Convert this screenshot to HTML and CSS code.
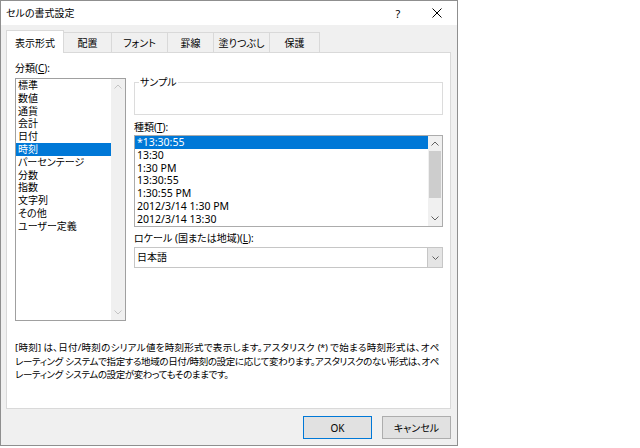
FILE: index.html
```html
<!DOCTYPE html>
<html lang="ja">
<head>
    <meta charset="UTF-8">
    <title>セルの書式設定</title>
    <link rel="stylesheet" href="styles.css">
</head>
<body>
    <div class="dialog">
        <div class="titlebar">
            <span class="title">セルの書式設定</span>
            <span class="help">?</span>
            <span class="close">
                <svg width="10" height="10" viewBox="0 0 10 10"><path d="M0.5 0.5L9.5 9.5M9.5 0.5L0.5 9.5" stroke="#000" stroke-width="1" fill="none"/></svg>
            </span>
        </div>
        <div class="body">
            <div class="tabs">
                <div class="tab active">表示形式</div>
                <div class="tab">配置</div>
                <div class="tab">フォント</div>
                <div class="tab">罫線</div>
                <div class="tab">塗りつぶし</div>
                <div class="tab">保護</div>
            </div>
            <div class="panel">
                <div class="columns">
                    <div class="col-left">
                        <label class="field-label">分類(<u>C</u>):</label>
                        <div class="listbox category">
                            <ul class="items">
                                <li>標準</li>
                                <li>数値</li>
                                <li>通貨</li>
                                <li>会計</li>
                                <li>日付</li>
                                <li class="selected">時刻</li>
                                <li>パーセンテージ</li>
                                <li>分数</li>
                                <li>指数</li>
                                <li>文字列</li>
                                <li>その他</li>
                                <li>ユーザー定義</li>
                            </ul>
                            <div class="scrollbar disabled">
                                <span class="arrow"><svg width="8" height="5" viewBox="0 0 8 5"><path d="M0.5 4.5L4 1L7.5 4.5" stroke="currentColor" fill="none"/></svg></span>
                                <span class="arrow"><svg width="8" height="5" viewBox="0 0 8 5"><path d="M0.5 0.5L4 4L7.5 0.5" stroke="currentColor" fill="none"/></svg></span>
                            </div>
                        </div>
                    </div>
                    <div class="col-right">
                        <fieldset class="sample">
                            <legend>サンプル</legend>
                        </fieldset>
                        <label class="field-label types-label">種類(<u>T</u>):</label>
                        <div class="listbox types">
                            <ul class="items">
                                <li class="selected">*13:30:55</li>
                                <li>13:30</li>
                                <li>1:30 PM</li>
                                <li>13:30:55</li>
                                <li>1:30:55 PM</li>
                                <li>2012/3/14 1:30 PM</li>
                                <li>2012/3/14 13:30</li>
                            </ul>
                            <div class="scrollbar">
                                <span class="arrow"><svg width="8" height="5" viewBox="0 0 8 5"><path d="M0.5 4.5L4 1L7.5 4.5" stroke="currentColor" fill="none"/></svg></span>
                                <div class="track"><div class="thumb"></div></div>
                                <span class="arrow"><svg width="8" height="5" viewBox="0 0 8 5"><path d="M0.5 0.5L4 4L7.5 0.5" stroke="currentColor" fill="none"/></svg></span>
                            </div>
                        </div>
                        <label class="field-label locale-label">ロケール (国または地域)(<u>L</u>):</label>
                        <div class="combo">
                            <span class="combo-value">日本語</span>
                            <span class="combo-btn"><svg width="7" height="4" viewBox="0 0 7 4"><path d="M0.5 0.5L3.5 3.5L6.5 0.5" stroke="#606060" fill="none"/></svg></span>
                        </div>
                    </div>
                </div>
                <p class="desc">
                    <span class="desc-line full">[時刻] は、日付/時刻のシリアル値を時刻形式で表示します。アスタリスク (*) で始まる時刻形式は、オペ</span>
                    <span class="desc-line full">レーティング システムで指定する地域の日付/時刻の設定に応じて変わります。アスタリスクのない形式は、オペ</span>
                    <span class="desc-line">レーティング システムの設定が変わってもそのままです。</span>
                </p>
            </div>
            <div class="buttons">
                <button class="default">OK</button>
                <button>キャンセル</button>
            </div>
        </div>
    </div>
</body>
</html>
```

FILE: styles.css
```css
body {
    margin: 0;
    background: #fff;
    font-family: "Noto Sans", "Noto Sans CJK JP", sans-serif;
    font-size: 10px;
    line-height: 13px;
    color: #000;
    font-feature-settings: "palt";
}

.dialog {
    width: 458px;
    height: 446px;
    box-sizing: border-box;
    border: 1px solid #8f8f8f;
    display: flex;
    flex-direction: column;
    background: #f0f0f0;
}

/* title bar */
.titlebar {
    height: 24px;
    background: #fff;
    display: flex;
    align-items: center;
    padding-left: 5px;
    font-size: 10px;
}

.help {
    margin-left: auto;
    width: 20px;
    margin-right: 9px;
    text-align: center;
    font-size: 11px;
}

.close {
    width: 40px;
    display: flex;
    justify-content: center;
}

.body {
    flex: 1;
    padding: 5px 6px 0 5px;
    display: flex;
    flex-direction: column;
}

/* tabs */
.tabs {
    display: flex;
    align-items: flex-end;
    height: 22px;
}

.tab {
    height: 20px;
    box-sizing: border-box;
    border: 1px solid #d9d9d9;
    border-bottom: none;
    margin-left: -1px;
    display: flex;
    align-items: center;
    justify-content: center;
    padding-top: 1px;
}

.tab:nth-child(1) { width: 58px; margin-left: 0; }
.tab:nth-child(2) { width: 48px; }
.tab:nth-child(3) { width: 57px; }
.tab:nth-child(4) { width: 47px; }
.tab:nth-child(5) { width: 57px; }
.tab:nth-child(6) { width: 51px; }

.tab.active {
    height: 23px;
    margin-bottom: -1px;
    background: #fff;
    position: relative;
    z-index: 1;
    padding-top: 2px;
}

.tab.active + .tab {
    border-left: none;
    margin-left: 0;
}

.panel {
    background: #fff;
    border: 1px solid #d9d9d9;
    height: 357px;
    box-sizing: border-box;
    padding: 9px 7px 0 8px;
}

.columns {
    display: flex;
    gap: 8px;
}

.col-left {
    width: 111px;
}

.col-right {
    width: 309px;
}

.field-label {
    display: block;
    height: 13px;
}

/* list boxes */
.listbox {
    display: flex;
    border: 1px solid #a0a0a0;
    box-sizing: border-box;
    background: #fff;
}

.listbox.category {
    margin-top: 3px;
    height: 243px;
}

.listbox.types {
    margin-top: 1px;
    height: 92px;
    border-color: #acacac;
    font-size: 10.5px;
}

.items {
    list-style: none;
    margin: 0;
    padding: 0;
    flex: 1;
    overflow: hidden;
}

.items li {
    height: 12.8px;
    line-height: 12.8px;
    padding-left: 2px;
    white-space: nowrap;
}

.items li.selected {
    background: #0078d7;
    color: #fff;
}

.scrollbar {
    width: 14px;
    background: #f0f0f0;
    display: flex;
    flex-direction: column;
    justify-content: space-between;
    color: #606060;
}

.scrollbar.disabled {
    color: #c4c4c4;
}

.arrow {
    height: 15px;
    display: flex;
    align-items: center;
    justify-content: center;
}

.track {
    flex: 1;
    padding: 0 1px;
}

.thumb {
    height: 47px;
    background: #cdcdcd;
}

/* sample group */
.sample {
    margin: 14px 0 0 0;
    padding: 0;
    height: 39px;
    box-sizing: border-box;
    border: 1px solid #dcdcdc;
}

.sample legend {
    margin-left: 4px;
    padding: 0 1px;
    line-height: 13px;
}

.types-label {
    margin-top: 6px;
}

.locale-label {
    margin-top: 5px;
}

/* combo box */
.combo {
    margin-top: 2px;
    height: 21px;
    box-sizing: border-box;
    border: 1px solid #c6c6c6;
    display: flex;
    align-items: stretch;
}

.combo-value {
    flex: 1;
    padding-left: 2px;
    display: flex;
    align-items: center;
}

.combo-btn {
    width: 14px;
    background: #e5e5e5;
    border-left: 1px solid #c6c6c6;
    display: flex;
    align-items: center;
    justify-content: center;
}

/* description */
.desc {
    margin: 20px 0 0 0;
    width: 424px;
    font-size: 9.5px;
    line-height: 13.5px;
    letter-spacing: -0.4px;
}

.desc-line {
    display: block;
    white-space: nowrap;
}

.desc-line.full {
    white-space: normal;
    text-align: justify;
    text-align-last: justify;
}

/* buttons */
.buttons {
    display: flex;
    justify-content: flex-end;
    gap: 10px;
    margin-top: 7px;
}

button {
    width: 69px;
    height: 23px;
    background: #e1e1e1;
    border: 1px solid #adadad;
    font-family: inherit;
    font-size: 10px;
    font-feature-settings: "palt";
    color: #000;
    padding: 0;
}

button.default {
    border-color: #0078d7;
}
```
